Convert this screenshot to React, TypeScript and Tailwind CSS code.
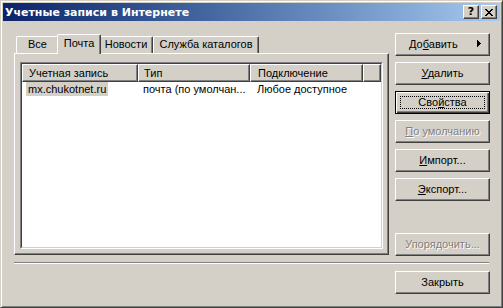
import React from "react";

function CapBtn({ children }: { children: React.ReactNode }) {
  return (
    <div className="w-[16px] h-[14px] bg-[#d4d0c8] border border-t-white border-l-white border-r-[#404040] border-b-[#404040] shadow-[inset_-1px_-1px_0_#808080] flex items-center justify-center">
      {children}
    </div>
  );
}

function Btn({
  children,
  disabled,
  isDefault,
  className = "",
}: {
  children: React.ReactNode;
  disabled?: boolean;
  isDefault?: boolean;
  className?: string;
}) {
  if (isDefault) {
    return (
      <div
        className={`relative w-[95px] h-[23px] border border-black shadow-[inset_1px_1px_0_#fff,inset_-1px_-1px_0_#404040,inset_-2px_-2px_0_#808080] flex items-center justify-center ${className}`}
      >
        <div className="absolute left-[4px] top-[4px] right-[4px] bottom-[4px] border border-dotted border-black" />
        <span className="leading-[13px]">{children}</span>
      </div>
    );
  }
  return (
    <div
      className={`relative w-[95px] h-[23px] border border-t-white border-l-white border-r-[#404040] border-b-[#404040] shadow-[inset_-1px_-1px_0_#808080] flex items-center justify-center ${className}`}
    >
      <span
        className={`leading-[13px] ${
          disabled ? "text-[#808080] [text-shadow:1px_1px_0_#fff]" : ""
        }`}
      >
        {children}
      </span>
    </div>
  );
}

function Tab({
  children,
  w,
  selected,
}: {
  children: React.ReactNode;
  w: string;
  selected?: boolean;
}) {
  if (selected) {
    return (
      <div
        className={`relative z-10 ${w} h-[20px] -mb-[1px] -mx-[2px] bg-[#d4d0c8] border-t border-l border-t-white border-l-white border-r border-r-[#404040] shadow-[inset_-1px_0_0_#808080] rounded-t-[2px] flex justify-center pt-[2px]`}
      >
        <span className="leading-[13px]">{children}</span>
      </div>
    );
  }
  return (
    <div
      className={`${w} h-[17px] bg-[#d4d0c8] border-t border-l border-t-white border-l-white border-r border-r-[#404040] shadow-[inset_-1px_0_0_#808080] rounded-t-[2px] flex justify-center pt-[1px]`}
    >
      <span className="leading-[13px]">{children}</span>
    </div>
  );
}

function HeadCell({ children, w }: { children?: React.ReactNode; w: string }) {
  return (
    <div
      className={`${w} h-[18px] shrink-0 border border-t-white border-l-white border-r-[#404040] border-b-[#404040] shadow-[inset_-1px_-1px_0_#808080] flex items-center pl-[5px] overflow-hidden whitespace-nowrap`}
    >
      <span className="leading-[13px]">{children}</span>
    </div>
  );
}

export default function App() {
  return (
    <div className="w-[503px] h-[308px] bg-[#d4d0c8] border border-t-[#d4d0c8] border-l-[#d4d0c8] border-r-[#404040] border-b-[#404040] shadow-[inset_1px_1px_0_#fff,inset_-1px_-1px_0_#808080] p-[2px] font-['Liberation_Sans',Arial,sans-serif] text-[11px] text-black overflow-hidden">
      {/* Title bar */}
      <div className="h-[18px] flex items-center bg-gradient-to-r from-[#0a246a] to-[#a6caf0] pl-[2px] pr-[3px]">
        <span className="flex-1 text-white font-bold font-['DejaVu_Sans',sans-serif] text-[11px] leading-[13px] whitespace-nowrap">
          Учетные записи в Интернете
        </span>
        <div className="flex gap-[2px]">
          <CapBtn>
            <span className="font-bold font-['DejaVu_Sans',sans-serif] text-[11px] leading-none -mt-[1px]">
              ?
            </span>
          </CapBtn>
          <CapBtn>
            <svg width="8" height="7" viewBox="0 0 8 7" shapeRendering="crispEdges">
              <path
                d="M0 0h2v1h-2zM6 0h2v1h-2zM1 1h2v1h-2zM5 1h2v1h-2zM2 2h4v1h-4zM3 3h2v1h-2zM2 4h4v1h-4zM1 5h2v1h-2zM5 5h2v1h-2zM0 6h2v1h-2zM6 6h2v1h-2z"
                fill="#000"
              />
            </svg>
          </CapBtn>
        </div>
      </div>

      {/* Body */}
      <div className="pl-[11px] pr-[10px] pt-[12px]">
        <div className="flex h-[223px] gap-[6px]">
          {/* Tab control */}
          <div className="w-[375px] pt-[1px] flex flex-col">
            <div className="relative z-10 h-[19px] flex items-end pl-[2px]">
              <Tab w="w-[43px]">Все</Tab>
              <Tab w="w-[44px]" selected>
                Почта
              </Tab>
              <Tab w="w-[54px]">Новости</Tab>
              <Tab w="w-[106px]">Служба каталогов</Tab>
            </div>
            <div className="h-[202px] border border-t-white border-l-white border-r-[#404040] border-b-[#404040] shadow-[inset_-1px_-1px_0_#808080] pt-[8px] pl-[5px] pr-[5px] pb-[5px]">
              {/* List view */}
              <div className="h-full border border-t-[#808080] border-l-[#808080] border-r-white border-b-white">
                <div className="h-full border border-t-[#404040] border-l-[#404040] border-r-[#d4d0c8] border-b-[#d4d0c8] bg-white flex flex-col">
                  <div className="flex bg-[#d4d0c8]">
                    <HeadCell w="w-[116px]">
                      <span className="pl-[1px]">Учетная запись</span>
                    </HeadCell>
                    <HeadCell w="w-[112px]">Тип</HeadCell>
                    <HeadCell w="w-[113px]">
                      <span className="pl-[2px]">Подключение</span>
                    </HeadCell>
                    <div className="flex-1 h-[18px] border border-t-white border-l-white border-r-[#404040] border-b-[#404040] shadow-[inset_-1px_-1px_0_#808080]" />
                  </div>
                  <div className="flex h-[14px] items-center whitespace-nowrap">
                    <div className="w-[116px] shrink-0 pl-[4px]">
                      <span className="inline-block bg-[#d4d0c8] px-[2px] leading-[14px]">
                        mx.chukotnet.ru
                      </span>
                    </div>
                    <div className="w-[112px] shrink-0 pl-[5px] leading-[14px] overflow-hidden">
                      почта (по умолчан...
                    </div>
                    <div className="w-[113px] shrink-0 pl-[7px] leading-[14px]">
                      Любое доступное
                    </div>
                  </div>
                </div>
              </div>
            </div>
          </div>

          {/* Buttons */}
          <div className="w-[95px] flex flex-col gap-[6px]">
            <div className="relative w-[95px] h-[23px] border border-t-white border-l-white border-r-[#404040] border-b-[#404040] shadow-[inset_-1px_-1px_0_#808080] flex items-center pl-[13px]">
              <span className="leading-[13px]">
                До<span className="underline underline-offset-[1px]">б</span>авить
              </span>
              <svg
                className="absolute right-[8px] top-[6px]"
                width="4"
                height="7"
                viewBox="0 0 4 7"
                shapeRendering="crispEdges"
              >
                <path d="M0 0h1v7h-1zM1 1h1v5h-1zM2 2h1v3h-1zM3 3h1v1h-1z" fill="#000" />
              </svg>
            </div>
            <Btn>
              <span className="underline underline-offset-[1px]">У</span>далить
            </Btn>
            <Btn isDefault>
              Сво<span className="underline underline-offset-[1px]">й</span>ства
            </Btn>
            <Btn disabled>
              <span className="underline underline-offset-[1px]">П</span>о умолчанию
            </Btn>
            <Btn>
              <span className="underline underline-offset-[1px]">И</span>мпорт...
            </Btn>
            <Btn>
              <span className="underline underline-offset-[1px]">Э</span>кспорт...
            </Btn>
            <Btn disabled className="mt-auto">
              Упорядочить...
            </Btn>
          </div>
        </div>

        {/* Separator */}
        <div className="mt-[6px] mr-[1px] h-[2px] border-t border-t-[#808080] border-b border-b-white" />

        <div className="flex justify-end mt-[7px]">
          <Btn>Закрыть</Btn>
        </div>
      </div>
    </div>
  );
}
